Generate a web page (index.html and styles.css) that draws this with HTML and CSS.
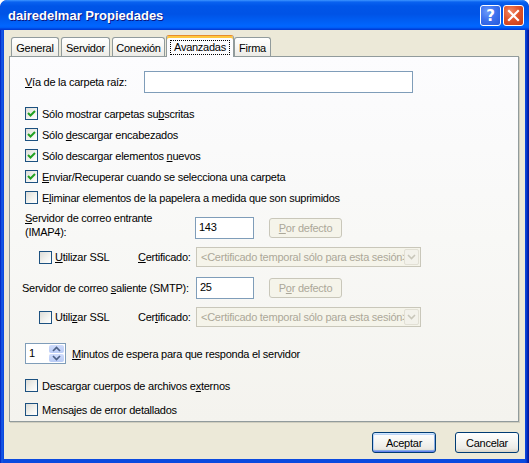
FILE: index.html
```html
<!DOCTYPE html>
<html lang="es">
<head>
<meta charset="utf-8">
<title>dairedelmar Propiedades</title>
<link rel="stylesheet" href="styles.css">
</head>
<body>
<div class="window">
  <div class="titlebar">
    <span class="title">dairedelmar Propiedades</span>
    <div class="caption-buttons">
      <span class="cap-btn help"><span class="qmark">?</span></span>
      <span class="cap-btn close">
        <svg width="19" height="19" viewBox="0 0 19 19"><path d="M5 5 L14 14 M14 5 L5 14" stroke="#fff" stroke-width="2.2" stroke-linecap="square" fill="none"/></svg>
      </span>
    </div>
  </div>
  <div class="client">
    <div class="tabs">
      <span class="tab t-general">General</span>
      <span class="tab t-servidor">Servidor</span>
      <span class="tab t-conexion">Conexión</span>
      <span class="tab tab-active t-avanzadas"><span class="focus">Avanzadas</span></span>
      <span class="tab t-firma">Firma</span>
    </div>
    <div class="panel">
      <div class="path-row">
        <span class="path-label"><u>V</u>ía de la carpeta raíz:</span>
        <span class="textbox path-box"></span>
      </div>

      <div class="checks">
        <div class="check-row"><span class="cb"><svg width="11" height="11" viewBox="0 0 11 11"><path d="M2 5 L4.5 7.5 L9 3" stroke="#21A121" stroke-width="2" fill="none"/></svg></span><span>Sólo mostrar carpetas su<u>b</u>scritas</span></div>
        <div class="check-row"><span class="cb"><svg width="11" height="11" viewBox="0 0 11 11"><path d="M2 5 L4.5 7.5 L9 3" stroke="#21A121" stroke-width="2" fill="none"/></svg></span><span>Sólo <u>d</u>escargar encabezados</span></div>
        <div class="check-row"><span class="cb"><svg width="11" height="11" viewBox="0 0 11 11"><path d="M2 5 L4.5 7.5 L9 3" stroke="#21A121" stroke-width="2" fill="none"/></svg></span><span>Sólo descargar elementos <u>n</u>uevos</span></div>
        <div class="check-row"><span class="cb"><svg width="11" height="11" viewBox="0 0 11 11"><path d="M2 5 L4.5 7.5 L9 3" stroke="#21A121" stroke-width="2" fill="none"/></svg></span><span><u>E</u>nviar/Recuperar cuando se selecciona una carpeta</span></div>
        <div class="check-row"><span class="cb"></span><span>E<u>l</u>iminar elementos de la papelera a medida que son suprimidos</span></div>
      </div>

      <div class="server-row imap-row">
        <span class="server-label imap-label"><u>S</u>ervidor de correo entrante<br>(IMAP4):</span>
        <span class="textbox port-box">143</span>
        <span class="btn-disabled"><u>P</u>or defecto</span>
      </div>

      <div class="ssl-row">
        <span class="ssl-check"><span class="cb"></span><span><u>U</u>tilizar SSL</span></span>
        <span class="cert-label"><u>C</u>ertificado:</span>
        <span class="combo-disabled"><span class="combo-text">&lt;Certificado temporal sólo para esta sesión&gt;</span><span class="combo-arrow"><svg width="9" height="6" viewBox="0 0 9 6"><path d="M1 1 L4.5 4.5 L8 1" stroke="#C9C7BA" stroke-width="1.6" fill="none"/></svg></span></span>
      </div>

      <div class="server-row smtp-row">
        <span class="server-label smtp-label">Servidor de correo <u>s</u>aliente (SMTP):</span>
        <span class="textbox port-box smtp-box">25</span>
        <span class="btn-disabled smtp-btn">P<u>o</u>r defecto</span>
      </div>

      <div class="ssl-row ssl-second">
        <span class="ssl-check"><span class="cb"></span><span>Utili<u>z</u>ar SSL</span></span>
        <span class="cert-label">Cer<u>t</u>ificado:</span>
        <span class="combo-disabled"><span class="combo-text">&lt;Certificado temporal sólo para esta sesión&gt;</span><span class="combo-arrow"><svg width="9" height="6" viewBox="0 0 9 6"><path d="M1 1 L4.5 4.5 L8 1" stroke="#C9C7BA" stroke-width="1.6" fill="none"/></svg></span></span>
      </div>

      <div class="spin-row">
        <span class="spin">
          <span class="spin-value">1</span>
          <span class="spin-arrows">
            <span class="spin-btn"><svg width="9" height="6" viewBox="0 0 9 6"><path d="M1 5 L4.5 1.5 L8 5" stroke="#4D6185" stroke-width="1.7" fill="none"/></svg></span>
            <span class="spin-btn"><svg width="9" height="6" viewBox="0 0 9 6"><path d="M1 1 L4.5 4.5 L8 1" stroke="#4D6185" stroke-width="1.7" fill="none"/></svg></span>
          </span>
        </span>
        <span class="spin-label"><u>M</u>inutos de espera para que responda el servidor</span>
      </div>

      <div class="checks lower-checks">
        <div class="check-row"><span class="cb"></span><span>Descargar cuerpos de archivos e<u>x</u>ternos</span></div>
        <div class="check-row"><span class="cb"></span><span>Mensajes de error detallados</span></div>
      </div>
    </div>

    <div class="dialog-buttons">
      <span class="btn btn-default">Aceptar</span>
      <span class="btn">Cancelar</span>
    </div>
  </div>
</div>
</body>
</html>
```

FILE: styles.css
```css
* { box-sizing: border-box; }

html, body {
  margin: 0;
  padding: 0;
}

body {
  width: 529px;
  height: 463px;
  overflow: hidden;
  background: #ffffff;
  font-family: "Liberation Sans", Arial, sans-serif;
  font-size: 11px;
  letter-spacing: -0.25px;
  color: #000;
}

.window {
  width: 529px;
  height: 463px;
  display: flex;
  flex-direction: column;
  border-radius: 7px 7px 0 0;
  background: linear-gradient(to right, #0019B8 0, #0842D6 1px, #1C5FEA 2px, #0B4ADF 3px, #0B4ADF 525px, #0734C6 527px, #001AA0 528px);
  overflow: hidden;
}

.titlebar {
  height: 30px;
  flex: none;
  display: flex;
  align-items: center;
  background: linear-gradient(to bottom, #3D95FF 0px, #0A62F0 2px, #0055E8 6px, #0053E6 14px, #0060F6 22px, #0066FF 26px, #005BF5 28px, #003DD7 29px, #003DD7 30px);
  border-radius: 7px 7px 0 0;
}

.title {
  flex: 1;
  padding-left: 8px;
  padding-top: 1px;
  color: #fff;
  font-weight: bold;
  font-size: 13px;
  letter-spacing: 0;
  text-shadow: 1px 1px 0 #0A1883;
}

.caption-buttons {
  display: flex;
  gap: 2px;
  margin-right: 5px;
  margin-top: 1px;
}

.cap-btn {
  width: 21px;
  height: 21px;
  border: 1px solid #fff;
  border-radius: 3px;
  display: flex;
  align-items: center;
  justify-content: center;
}

.help {
  background: radial-gradient(circle at 35% 30%, #6B9BFA 0, #3E72EE 45%, #2458DB 100%);
}

.qmark {
  color: #fff;
  font-family: "DejaVu Sans", sans-serif;
  font-weight: bold;
  font-size: 15px;
  letter-spacing: 0;
  line-height: 1;
  margin-top: 1px;
}

.close {
  background: radial-gradient(circle at 35% 30%, #F28A66 0, #E0552C 45%, #C43A17 100%);
}

.client {
  flex: 1;
  margin: 0 4px 4px 4px;
  background: #ECE9D8;
  display: flex;
  flex-direction: column;
}

/* Tabs */
.tabs {
  position: relative;
  z-index: 2;
  height: 26px;
  padding: 5px 0 0 7px;
  display: flex;
  align-items: flex-end;
}

.tab {
  height: 19px;
  border: 1px solid #919B9C;
  border-bottom: none;
  border-radius: 3px 3px 0 0;
  background: linear-gradient(to bottom, #FFFFFF 0, #F7F7F4 50%, #ECEBE6 100%);
  display: flex;
  align-items: center;
  justify-content: center;
  padding-top: 1px;
}

.t-general { width: 48px; margin-right: 2px; }
.t-servidor { width: 49px; margin-right: 2px; }
.t-conexion { width: 53px; }
.t-firma { width: 37px; }

.tab-active {
  width: 68px;
  height: 22px;
  margin-left: 1px;
  margin-bottom: -1px;
  background: #FCFCFE;
  border-top: 1px solid #E68B2C;
  box-shadow: inset 0 2px 0 #FFC73C;
  padding-top: 2px;
}

.focus {
  border: 1px dotted #000;
  padding: 0 3px;
  line-height: 13px;
}

/* Panel */
.panel {
  width: 510px;
  height: 366px;
  margin-left: 5px;
  border: 1px solid #919B9C;
  background: linear-gradient(to bottom, #FCFCFE 0, #F8F8F6 50%, #F4F3EE 100%);
  box-shadow: 1px 1px 0 #D0CEBF;
  padding-left: 15px;
  display: flex;
  flex-direction: column;
}

.path-row {
  margin-top: 14px;
  height: 22px;
  display: flex;
  align-items: center;
}

.path-label {
  width: 119px;
}

.textbox {
  display: block;
  height: 22px;
  border: 1px solid #7F9DB9;
  background: #fff;
  padding: 3px 0 0 3px;
}

.path-box { width: 269px; }

.checks {
  margin-top: 10px;
  display: flex;
  flex-direction: column;
}

.check-row {
  height: 21px;
  display: flex;
  align-items: center;
}

.cb {
  flex: none;
  width: 13px;
  height: 13px;
  margin-right: 4px;
  border: 1px solid #1C5180;
  background: linear-gradient(135deg, #DCDCD7 0, #F2F2EE 55%, #FFFFFF 100%);
  display: flex;
  align-items: center;
  justify-content: center;
}

.server-row {
  display: flex;
  align-items: flex-start;
}

.imap-row {
  margin-top: 3px;
  height: 29px;
}

.server-label {
  line-height: 14px;
}

.imap-label { width: 170px; }

.port-box {
  width: 59px;
  margin-top: 6px;
}

.btn-disabled {
  width: 73px;
  height: 20px;
  margin-left: 15px;
  margin-top: 7px;
  border: 1px solid #C9C7BA;
  border-radius: 3px;
  background: #F5F4EA;
  color: #ACA899;
  display: flex;
  align-items: center;
  justify-content: center;
}

.ssl-row {
  margin-top: 7px;
  height: 20px;
  display: flex;
  align-items: center;
  padding-left: 14px;
}

.ssl-second { margin-top: 8px; }

.ssl-check {
  width: 99px;
  display: flex;
  align-items: center;
}

.ssl-check .cb { margin-right: 3px; }

.cert-label { width: 58px; }

.combo-disabled {
  width: 225px;
  height: 20px;
  border: 1px solid #C9C7BA;
  background: #F5F4EA;
  color: #ACA899;
  display: flex;
  align-items: center;
  padding: 1px;
  overflow: hidden;
}

.combo-text {
  flex: 1;
  white-space: nowrap;
  overflow: hidden;
  padding-left: 3px;
}

.combo-arrow {
  flex: none;
  width: 15px;
  height: 16px;
  border: 1px solid #E2E0D5;
  border-radius: 2px;
  background: #F3F2EB;
  display: flex;
  align-items: center;
  justify-content: center;
}

.smtp-row {
  margin-top: 10px;
  height: 22px;
  margin-left: -3px;
  align-items: flex-start;
}

.smtp-label {
  width: 174px;
  margin-top: 4px;
}

.smtp-box {
  width: 58px;
  margin-top: 0;
}

.smtp-btn { margin-top: 1px; }

.spin-row {
  margin-top: 16px;
  height: 21px;
  display: flex;
  align-items: center;
}

.spin {
  width: 41px;
  height: 21px;
  border: 1px solid #7F9DB9;
  background: #fff;
  display: flex;
}

.spin-value {
  flex: 1;
  padding: 3px 0 0 3px;
}

.spin-arrows {
  width: 15px;
  margin: 1px 1px 1px 0;
  display: flex;
  flex-direction: column;
  gap: 1px;
}

.spin-btn {
  flex: 1;
  border-radius: 2px;
  background: linear-gradient(to bottom, #CFDCFB 0, #B9CBF5 100%);
  display: flex;
  align-items: center;
  justify-content: center;
}

.spin-label { margin-left: 6px; }

.lower-checks {
  margin-top: 11px;
  gap: 3px;
}

/* Dialog buttons */
.dialog-buttons {
  margin-top: 10px;
  display: flex;
  justify-content: flex-end;
  gap: 19px;
  padding-right: 6px;
}

.btn {
  width: 64px;
  height: 21px;
  border: 1px solid #003C74;
  border-radius: 3px;
  background: linear-gradient(to bottom, #FFFFFF 0, #F6F6F3 40%, #ECEBE6 80%, #D8D3C8 100%);
  display: flex;
  align-items: center;
  justify-content: center;
}

.btn-default {
  box-shadow: inset 0 1px 0 #CEE7FF, inset 0 -1px 0 #6982EE, inset 1px 0 0 #B8D2FA, inset -1px 0 0 #89ADE4, inset 0 2px 0 #BCD4F6, inset 0 -2px 0 #89ADE4;
}
```
